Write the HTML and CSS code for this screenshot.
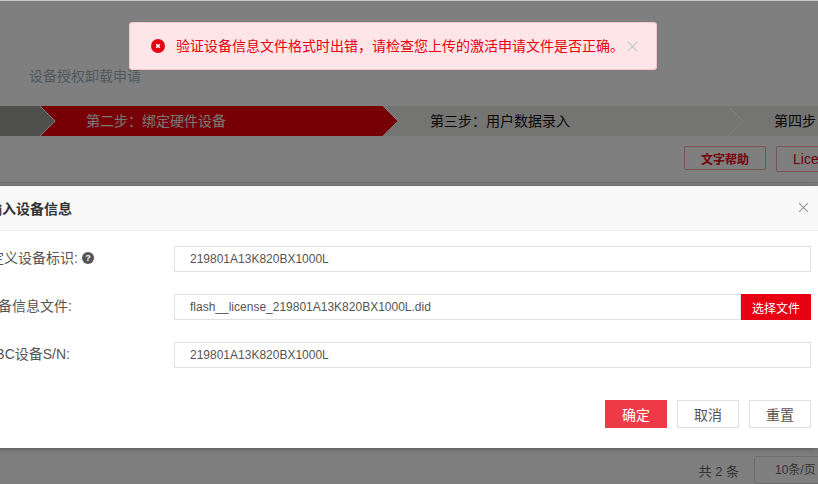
FILE: index.html
```html
<!DOCTYPE html>
<html lang="zh-CN">
<head>
<meta charset="utf-8">
<title>设备授权卸载申请</title>
<link rel="stylesheet" href="styles.css">
</head>
<body>
<div class="page">
  <h1 class="page-title">设备授权卸载申请</h1>
  <div class="steps">
    <div class="step step-done"></div>
    <div class="step step-active"><span>第二步：绑定硬件设备</span></div>
    <div class="step step-third"><span>第三步：用户数据录入</span></div>
    <div class="step step-fourth"><span>第四步</span></div>
    <svg class="chevron chevron-a" viewBox="0 0 16 30"><path d="M0 0 15 15 0 30" /></svg>
    <svg class="chevron chevron-b" viewBox="0 0 16 30"><path d="M0 0 15 15 0 30" /></svg>
    <svg class="chevron chevron-c" viewBox="0 0 16 30"><path d="M0 0 15 15 0 30" /></svg>
  </div>
  <div class="toolbar">
    <button class="outline-btn help-btn">文字帮助</button>
    <button class="outline-btn lic-btn">License</button>
  </div>
  <div class="table-line"></div>
  <div class="pager">
    <span>共 2 条</span>
    <span class="page-size">10条/页</span>
  </div>
</div>
<div class="mask"></div>
<div class="toast">
  <svg class="toast-icon" viewBox="0 0 14 14"><circle cx="7" cy="7" r="7" /><path d="M5.2 5.2l3.6 3.600M8.800 5.2l-3.6 3.600" /></svg>
  <span class="toast-text">验证设备信息文件格式时出错，请检查您上传的激活申请文件是否正确。</span>
  <svg class="toast-close" viewBox="0 0 11 11"><path d="M.5.5l10 10M10.500.5l-10 10" /></svg>
</div>
<div class="modal">
  <header class="modal-head">
    <span class="modal-title">输入设备信息</span>
    <svg class="modal-close" viewBox="0 0 10 10"><path d="M1 1l8 8M9 1 1 9" /></svg>
  </header>
  <div class="modal-body">
    <div class="row">
      <label class="label label-custom">自定义设备标识:<span class="help-dot">?</span></label>
      <div class="field">219801A13K820BX1000L</div>
    </div>
    <div class="row">
      <label class="label label-file">设备信息文件:</label>
      <div class="field">flash__license_219801A13K820BX1000L.did</div>
      <button class="file-btn">选择文件</button>
    </div>
    <div class="row">
      <label class="label label-sn">ABC设备S/N:</label>
      <div class="field">219801A13K820BX1000L</div>
    </div>
  </div>
  <footer class="modal-foot">
    <button class="btn btn-primary">确定</button>
    <button class="btn">取消</button>
    <button class="btn">重置</button>
  </footer>
</div>
</body>
</html>
```

FILE: styles.css
```css
* { box-sizing: border-box; }
html, body { margin: 0; height: 100%; overflow: hidden; }
body {
  position: relative;
  width: 818px;
  height: 484px;
  padding-top: 1px;
  background: #c8c8c8;
  font-family: "Liberation Sans", "Noto Sans CJK SC", sans-serif;
  font-size: 14px;
  color: #333;
}
button { font-family: inherit; cursor: pointer; }

.page { height: 483px; padding-top: 66px; overflow: hidden; background: #fff; }
.page-title {
  margin: 0 0 0 29px;
  height: 39px;
  font-size: 14px;
  line-height: 18px;
  font-weight: 400;
  color: #a0b0bc;
}
.steps { position: relative; display: flex; height: 30px; width: 818px; overflow: hidden; line-height: 30px; white-space: nowrap; background: #e8e8e6; }
.step { flex: none; height: 30px; }
.step-done { width: 40px; background: #9e9e9a; }
.step-active { width: 343px; padding-left: 46px; background: #ee000f; color: #f0f0e8; }
.step-third { width: 345px; padding-left: 47px; color: #111; }
.step-fourth { padding-left: 46px; color: #111; }
.chevron { position: absolute; top: 0; width: 16px; height: 30px; overflow: visible; }
.chevron path { fill: #e8e8e6; stroke: #fff; stroke-width: 1; }
.chevron-a { left: 40px; }
.chevron-a path { fill: #9e9e9a; }
.chevron-b { left: 383px; }
.chevron-b path { fill: #ee000f; }
.chevron-c { left: 728px; }

.toolbar { display: flex; justify-content: flex-end; gap: 10px; margin: 10px -32px 0 0; height: 26px; }
.outline-btn {
  padding: 0;
  height: 24px;
  background: #fff;
  border: 1px solid #f0a6ac;
  border-radius: 2px;
  color: #e60012;
  font-size: 12px;
  font-weight: 700;
  white-space: nowrap;
}
.help-btn { width: 82px; }
.lic-btn { width: 74px; height: 26px; padding-left: 16px; font-size: 14px; font-weight: 400; text-align: left; overflow: hidden; }
.table-line { height: 1px; margin-top: 10px; background: #e4e4e4; }

.pager { position: absolute; right: -6px; top: 456px; display: flex; align-items: center; gap: 15px; color: #666; font-size: 13px; }
.page-size { display: block; width: 70px; height: 28px; line-height: 26px; padding-left: 20px; border: 1px solid #d9d9d9; border-radius: 3px; font-size: 12px; white-space: nowrap; overflow: hidden; }

.mask { position: absolute; inset: 1px 0 0 0; background: rgba(0, 0, 0, .5); }

.toast {
  position: absolute;
  left: 129px;
  top: 22px;
  width: 528px;
  height: 48px;
  display: flex;
  align-items: center;
  padding-left: 21px;
  background: #fde5e8;
  border: 1px solid #f5c6cc;
  border-radius: 3px;
}
.toast-icon { flex: none; width: 14px; height: 14px; margin-right: 11px; }
.toast-icon circle { fill: #e60012; }
.toast-icon path { stroke: #fff; stroke-width: 1.6; fill: none; }
.toast-text { display: block; padding-bottom: 2px; color: #e60012; font-size: 14px; white-space: nowrap; }
.toast-close { flex: none; width: 11px; height: 11px; margin-left: 3px; }
.toast-close path { stroke: #c3ccd6; stroke-width: 1.1; fill: none; }

.modal {
  position: absolute;
  left: -44px;
  top: 186px;
  width: 862px;
  height: 262px;
  background: #fff;
  box-shadow: 0 1px 6px rgba(0, 0, 0, .3);
}
.modal-head {
  display: flex;
  align-items: center;
  justify-content: space-between;
  height: 45px;
  padding: 0 9px 0 32px;
  background: #f8f8f8;
  border-bottom: 1px solid #eee;
}
.modal-title { font-size: 14px; font-weight: 700; color: #333; }
.modal-close { width: 11px; height: 11px; margin-bottom: 2px; }
.modal-close path { stroke: #999; stroke-width: 1; fill: none; }
.modal-body { display: flex; flex-direction: column; gap: 22px; padding: 15px 7px 0 0; }
.row { display: flex; align-items: center; height: 26px; }
.label { flex: none; display: block; width: 218px; padding-bottom: 5px; color: #555; font-size: 14px; white-space: nowrap; }
.label-custom { padding-left: 20px; }
.label-file { padding-left: 28px; }
.label-sn { padding-left: 30px; }
.help-dot {
  display: inline-block;
  width: 12px;
  height: 12px;
  margin-left: 4px;
  border-radius: 50%;
  background: #555;
  color: #fff;
  font-size: 9px;
  font-weight: 700;
  line-height: 12px;
  text-align: center;
  vertical-align: 2px;
}
.field {
  flex: 1;
  height: 26px;
  padding-left: 15px;
  line-height: 24px;
  border: 1px solid #e0e0e6;
  font-size: 12px;
  color: #555;
}
.file-btn {
  flex: none;
  width: 70px;
  height: 26px;
  padding: 0;
  border: 0;
  background: #e60012;
  color: #fff;
  font-size: 12px;
}
.modal-foot { display: flex; justify-content: flex-end; gap: 10px; margin-top: 32px; padding-right: 7px; }
.btn {
  width: 62px;
  height: 28px;
  padding: 0;
  background: #fff;
  border: 1px solid #e0e0e6;
  color: #555;
  font-size: 14px;
}
.btn-primary { background: #ee3a47; border-color: #ee3a47; color: #fff; }
```
